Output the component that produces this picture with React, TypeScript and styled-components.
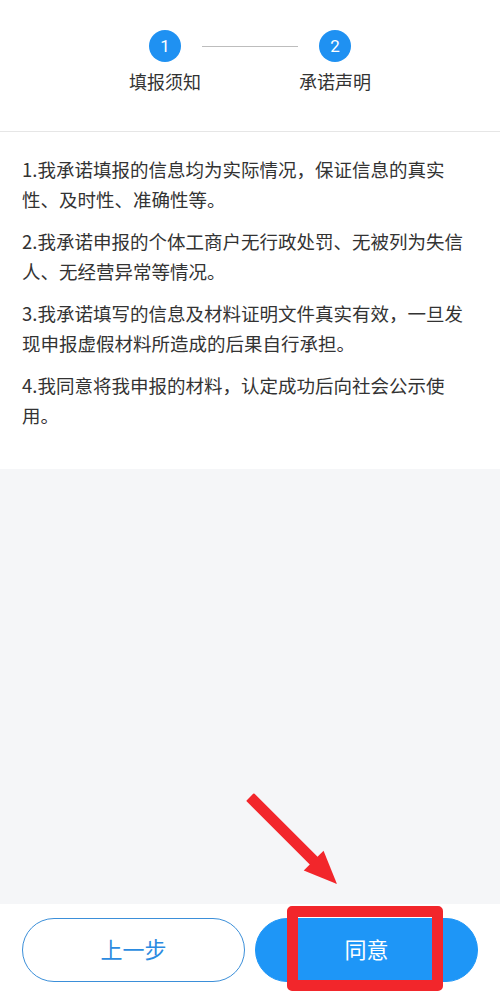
import React from "react";
import styled, { createGlobalStyle } from "styled-components";

const Global = createGlobalStyle`
  html, body { margin: 0; padding: 0; }
  body {
    font-family: "Noto Sans CJK SC", "Noto Sans", Roboto, sans-serif;
    background: #ffffff;
  }
  #root { min-height: 100vh; }
`;

const Page = styled.div`
  position: relative;
  display: flex;
  flex-direction: column;
  min-height: 100vh;
  background: #f5f6f8;
`;

const Header = styled.header`
  box-sizing: border-box;
  height: 132px;
  padding-top: 30px;
  background: #ffffff;
  border-bottom: 1px solid #e6e6e6;
`;

const StepsRow = styled.div`
  display: flex;
  justify-content: center;
  align-items: flex-start;
`;

const Step = styled.div`
  width: 72px;
  display: flex;
  flex-direction: column;
  align-items: center;
`;

const Circle = styled.div`
  width: 32px;
  height: 32px;
  border-radius: 50%;
  background: #1f91f2;
  color: #ffffff;
  font-family: Roboto, "Noto Sans", sans-serif;
  font-size: 17px;
  display: flex;
  align-items: center;
  justify-content: center;
`;

const StepLabel = styled.div`
  margin-top: 7px;
  font-size: 18px;
  line-height: 24px;
  color: #333333;
  white-space: nowrap;
`;

const Connector = styled.div`
  width: 96px;
  height: 1px;
  margin: 16px 1px 0;
  background: #bdbdbd;
`;

const Content = styled.section`
  background: #ffffff;
  padding: 22px 22px 27px;
`;

const Para = styled.p`
  margin: 0 0 12px;
  font-size: 18.5px;
  line-height: 30px;
  color: #333333;
`;

const Filler = styled.div`
  flex: 1;
`;

const Footer = styled.footer`
  position: relative;
  display: flex;
  gap: 10px;
  padding: 14px 22px 14px;
  background: #ffffff;
`;

const Button = styled.button<{ $primary?: boolean }>`
  flex: 1;
  height: 64px;
  border-radius: 32px;
  border: 1px solid ${(p) => (p.$primary ? "#1e96f7" : "#3b8fd9")};
  background: ${(p) => (p.$primary ? "#1e96f7" : "#ffffff")};
  color: ${(p) => (p.$primary ? "#ffffff" : "#2b8be0")};
  font-family: "Noto Sans CJK SC", sans-serif;
  font-size: 22px;
  line-height: 1;
  padding: 0 0 4px;
`;

const Highlight = styled.div`
  position: absolute;
  left: 287px;
  top: 2px;
  width: 156px;
  height: 85px;
  box-sizing: border-box;
  border: 11px solid #f2262b;
  border-radius: 5px;
  pointer-events: none;
`;

const ArrowMark = styled.svg`
  position: absolute;
  left: 240px;
  top: 787px;
  width: 110px;
  height: 110px;
  pointer-events: none;
`;

const paragraphs = [
  "1.我承诺填报的信息均为实际情况，保证信息的真实性、及时性、准确性等。",
  "2.我承诺申报的个体工商户无行政处罚、无被列为失信人、无经营异常等情况。",
  "3.我承诺填写的信息及材料证明文件真实有效，一旦发现申报虚假材料所造成的后果自行承担。",
  "4.我同意将我申报的材料，认定成功后向社会公示使用。",
];

export default function App() {
  return (
    <>
      <Global />
      <Page>
        <Header>
          <StepsRow>
            <Step>
              <Circle>1</Circle>
              <StepLabel>填报须知</StepLabel>
            </Step>
            <Connector />
            <Step>
              <Circle>2</Circle>
              <StepLabel>承诺声明</StepLabel>
            </Step>
          </StepsRow>
        </Header>
        <Content>
          {paragraphs.map((t) => (
            <Para key={t}>{t}</Para>
          ))}
        </Content>
        <Filler />
        <Footer>
          <Button>上一步</Button>
          <Button $primary>同意</Button>
          <Highlight />
        </Footer>
        <ArrowMark viewBox="0 0 110 110">
          <g transform="translate(10 10) rotate(45)" fill="#f2262b">
            <rect x="0" y="-5.5" width="96" height="11" rx="1" />
            <polygon points="90,-14 123,0 90,14" />
          </g>
        </ArrowMark>
      </Page>
    </>
  );
}
